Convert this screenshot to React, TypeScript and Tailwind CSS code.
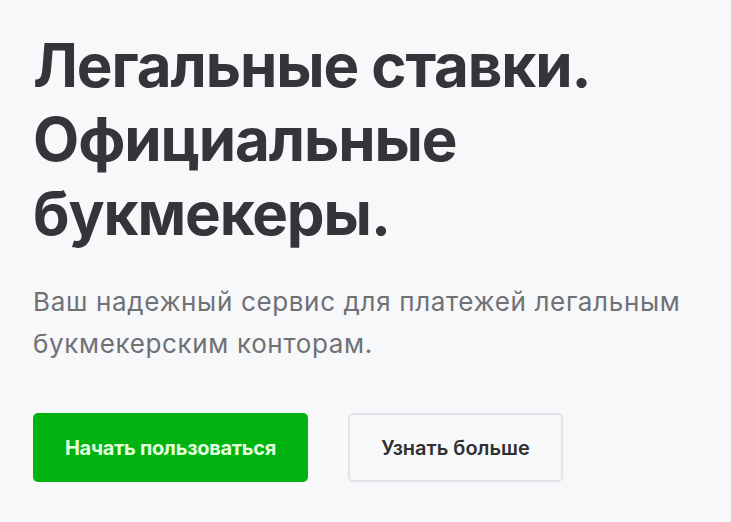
import React from 'react';

const Hero = () => {
  return (
    <section className="min-h-[522px] bg-[#f7f8fa] px-[33px] pt-[28px]" style={{ fontFamily: 'Inter, "Noto Sans", sans-serif' }}>
      <h1 className="text-[60px] font-bold leading-[74px] tracking-[-1.1px] text-[#343538]">
        Легальные ставки.
        <br />
        Официальные
        <br />
        букмекеры.
      </h1>

      <p className="mt-[31px] max-w-[690px] text-[26px] font-normal leading-[42px] tracking-[0.65px] text-[#707175]">
        Ваш надежный сервис для платежей легальным букмекерским конторам.
      </p>

      <div className="mt-[48px] flex items-center gap-[40px]">
        <button className="h-[69px] w-[275px] rounded-[5px] bg-[#00b311] text-[20px] font-bold tracking-[-0.3px] text-[#e4ffdf]">
          Начать пользоваться
        </button>
        <button className="h-[69px] w-[215px] rounded-[5px] border-2 border-[#e1e3e6] bg-[#f8f9fa] text-[20px] font-semibold text-[#2f3033]">
          Узнать больше
        </button>
      </div>
    </section>
  );
};

export default function App() {
  return <Hero />;
}
